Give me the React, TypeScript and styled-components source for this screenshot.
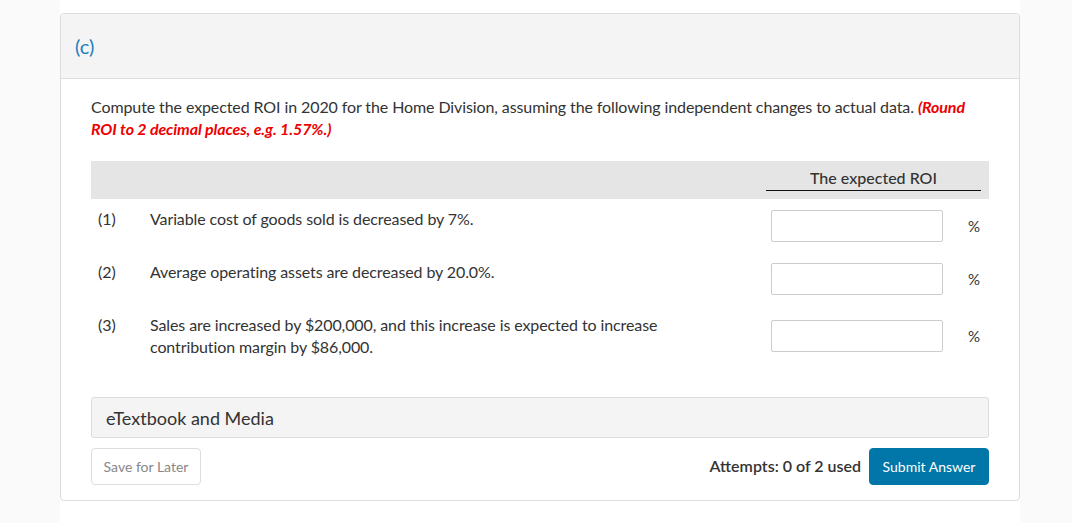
import React from 'react';
import styled, { createGlobalStyle } from 'styled-components';

const GlobalStyle = createGlobalStyle`
  html, body {
    margin: 0;
    padding: 0;
    background: #fafafa;
    font-family: Lato, "Open Sans", Arial, sans-serif;
    color: #333;
  }
`;

const Page = styled.div`
  width: 960px;
  margin-left: 60px;
  min-height: 523px;
  background: #fff;
  padding-top: 13px;
  box-sizing: border-box;
`;

const Card = styled.div`
  border: 1px solid #ddd;
  border-radius: 4px;
  background: #fff;
  overflow: hidden;
`;

const CardHeader = styled.div`
  height: 64px;
  display: flex;
  align-items: center;
  padding-left: 14px;
  background: #f4f4f4;
  border-bottom: 1px solid #ddd;
  font-size: 20px;
  color: #1f7dbb;
`;

const CardBody = styled.div`
  padding: 17px 30px 15px 30px;
`;

const Prompt = styled.p`
  margin: 0;
  font-size: 16px;
  line-height: 22px;
  letter-spacing: -0.1px;
  color: #333;
`;

const Hint = styled.span`
  color: #ee0000;
  font-weight: 700;
  font-style: italic;
`;

const Table = styled.div`
  margin-top: 21px;
`;

const HeadBand = styled.div`
  display: grid;
  grid-template-columns: 59px 1fr 172px 46px;
  height: 38px;
  background: #e5e5e5;
`;

const HeadCell = styled.div`
  grid-column: 3 / 5;
  margin: 0 8px 8px -5px;
  align-self: end;
  border-bottom: 1px solid #111;
  text-align: center;
  font-size: 16px;
  font-weight: 500;
  line-height: 20px;
  padding-bottom: 2px;
`;

const Row = styled.div`
  display: grid;
  grid-template-columns: 59px 1fr 172px 46px;
  min-height: 53px;
  align-items: center;
`;

const Num = styled.div`
  align-self: start;
  padding: 9px 0 9px 7px;
  font-size: 16px;
  line-height: 22px;
`;

const Desc = styled.div`
  align-self: start;
  padding: 9px 0;
  font-size: 16px;
  line-height: 22px;
  letter-spacing: -0.1px;
  max-width: 520px;
`;

const AnswerInput = styled.input`
  width: 172px;
  height: 32px;
  box-sizing: border-box;
  border: 1px solid #ccc;
  border-radius: 2px;
  background: #fff;
  font: inherit;
`;

const Unit = styled.div`
  font-size: 15px;
  padding-left: 25px;
`;

const MediaBox = styled.div`
  margin-top: 30px;
  height: 41px;
  box-sizing: border-box;
  display: flex;
  align-items: center;
  padding-left: 14px;
  background: #f4f4f4;
  border: 1px solid #ddd;
  border-radius: 3px;
  font-size: 18px;
  color: #333;
`;

const Actions = styled.div`
  margin-top: 10px;
  display: flex;
  align-items: center;
`;

const Button = styled.button<{ $primary?: boolean }>`
  height: 37px;
  padding: 0;
  border-radius: 4px;
  font-family: Lato, "Open Sans", Arial, sans-serif;
  font-size: 14px;
  cursor: pointer;
  border: 1px solid ${p => (p.$primary ? '#0077a8' : '#ddd')};
  background: ${p => (p.$primary ? '#0077a8' : '#fff')};
  color: ${p => (p.$primary ? '#fff' : '#888')};
  width: ${p => (p.$primary ? '120px' : '110px')};
`;

const Spacer = styled.div`
  flex: 1;
`;

const Attempts = styled.span`
  font-size: 16px;
  font-weight: 600;
  color: #333;
  margin-right: 8px;
  margin-top: -2px;
`;

const rows = [
  { n: '(1)', text: 'Variable cost of goods sold is decreased by 7%.' },
  { n: '(2)', text: 'Average operating assets are decreased by 20.0%.' },
  {
    n: '(3)',
    text: 'Sales are increased by $200,000, and this increase is expected to increase contribution margin by $86,000.',
  },
];

const App = () => {
  return (
    <>
      <GlobalStyle />
      <Page>
        <Card>
          <CardHeader>(c)</CardHeader>
          <CardBody>
            <Prompt>
              Compute the expected ROI in 2020 for the Home Division, assuming the following independent changes to
              actual data. <Hint>(Round ROI to 2 decimal places, e.g. 1.57%.)</Hint>
            </Prompt>

            <Table>
              <HeadBand>
                <HeadCell>The expected ROI</HeadCell>
              </HeadBand>
              {rows.map(r => (
                <Row key={r.n}>
                  <Num>{r.n}</Num>
                  <Desc>{r.text}</Desc>
                  <AnswerInput type="text" />
                  <Unit>%</Unit>
                </Row>
              ))}
            </Table>

            <MediaBox>eTextbook and Media</MediaBox>

            <Actions>
              <Button>Save for Later</Button>
              <Spacer />
              <Attempts>Attempts: 0 of 2 used</Attempts>
              <Button $primary>Submit Answer</Button>
            </Actions>
          </CardBody>
        </Card>
      </Page>
    </>
  );
};

export default App;
